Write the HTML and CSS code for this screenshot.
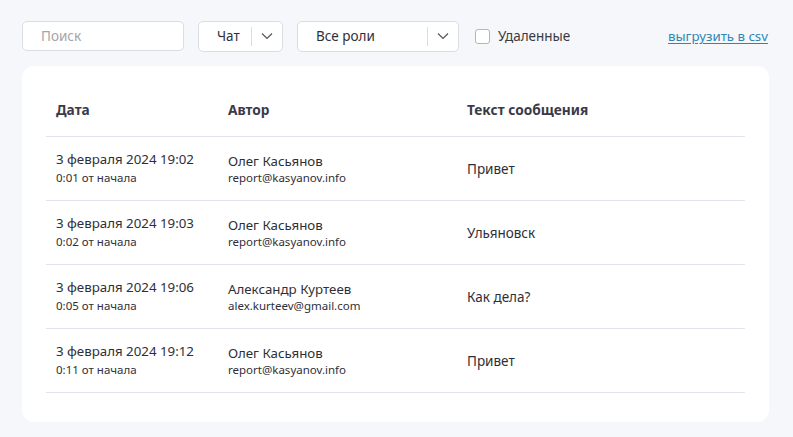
FILE: index.html
```html
<!DOCTYPE html>
<html lang="ru">
<head>
    <meta charset="UTF-8">
    <meta name="viewport" content="width=device-width, initial-scale=1.0">
    <title>Сообщения чата</title>
    <link rel="stylesheet" href="styles.css">
</head>
<body>
    <!-- Панель фильтров -->
    <div class="toolbar">
        <input class="search" type="text" placeholder="Поиск">

        <div class="select select-chat">
            <span class="select-value">Чат</span>
            <span class="select-arrow">
                <svg width="12" height="8" viewBox="0 0 12 8"><path d="M1 1.5l5 5 5-5" fill="none" stroke="#555" stroke-width="1.2"/></svg>
            </span>
        </div>

        <div class="select select-roles">
            <span class="select-value">Все роли</span>
            <span class="select-arrow">
                <svg width="12" height="8" viewBox="0 0 12 8"><path d="M1 1.5l5 5 5-5" fill="none" stroke="#555" stroke-width="1.2"/></svg>
            </span>
        </div>

        <label class="check">
            <span class="check-box"></span>
            Удаленные
        </label>

        <a class="export" href="#">выгрузить в csv</a>
    </div>

    <!-- Таблица сообщений -->
    <div class="card">
        <table class="messages">
            <thead>
                <tr>
                    <th class="col-date">Дата</th>
                    <th class="col-author">Автор</th>
                    <th>Текст сообщения</th>
                </tr>
            </thead>
            <tbody>
                <tr>
                    <td>
                        <div class="main">3 февраля 2024 19:02</div>
                        <div class="sub">0:01 от начала</div>
                    </td>
                    <td>
                        <div class="name">Олег Касьянов</div>
                        <div class="email">report@kasyanov.info</div>
                    </td>
                    <td class="text">Привет</td>
                </tr>
                <tr>
                    <td>
                        <div class="main">3 февраля 2024 19:03</div>
                        <div class="sub">0:02 от начала</div>
                    </td>
                    <td>
                        <div class="name">Олег Касьянов</div>
                        <div class="email">report@kasyanov.info</div>
                    </td>
                    <td class="text">Ульяновск</td>
                </tr>
                <tr>
                    <td>
                        <div class="main">3 февраля 2024 19:06</div>
                        <div class="sub">0:05 от начала</div>
                    </td>
                    <td>
                        <div class="name">Александр Куртеев</div>
                        <div class="email">alex.kurteev@gmail.com</div>
                    </td>
                    <td class="text">Как дела?</td>
                </tr>
                <tr>
                    <td>
                        <div class="main">3 февраля 2024 19:12</div>
                        <div class="sub">0:11 от начала</div>
                    </td>
                    <td>
                        <div class="name">Олег Касьянов</div>
                        <div class="email">report@kasyanov.info</div>
                    </td>
                    <td class="text">Привет</td>
                </tr>
            </tbody>
        </table>
    </div>
</body>
</html>
```

FILE: styles.css
```css
/* Общие стили */
body {
    font-family: "Noto Sans", "Open Sans", sans-serif;
    margin: 0;
    padding: 21px 24px 0 22px;
    background-color: #f6f7fb;
    color: #2f2f38;
}

/* Панель фильтров */
.toolbar {
    display: flex;
    align-items: center;
    height: 30px;
    margin-bottom: 15px;
}

.search {
    box-sizing: border-box;
    width: 162px;
    height: 30px;
    padding: 0 18px;
    font-family: inherit;
    font-size: 13.5px;
    border: 1px solid #dcdde3;
    border-radius: 5px;
    background-color: #fff;
    margin-right: 14px;
}

.search::placeholder {
    color: #a3a4ab;
}

.select {
    box-sizing: border-box;
    display: flex;
    align-items: center;
    height: 31px;
    border: 1px solid #dcdde3;
    border-radius: 5px;
    background-color: #fff;
    font-size: 13.5px;
    margin-right: 14px;
}

.select-chat {
    width: 85px;
}

.select-roles {
    width: 162px;
}

.select-value {
    flex: 1;
    padding-left: 18px;
}

.select-arrow {
    display: flex;
    align-items: center;
    justify-content: center;
    width: 30px;
    height: 19px;
    border-left: 1px solid #dcdde3;
}

.check {
    display: flex;
    align-items: center;
    font-size: 13.5px;
    color: #3a3a44;
    margin-left: 2px;
}

.check-box {
    box-sizing: border-box;
    width: 15px;
    height: 15px;
    border: 1.5px solid #b4b5bb;
    border-radius: 3px;
    margin-right: 8px;
    background-color: #fff;
}

.export {
    margin-left: auto;
    font-size: 13.3px;
    color: #2f86b3;
    text-decoration: underline;
    text-underline-offset: 2px;
    margin-right: 1px;
}

/* Карточка с таблицей */
.card {
    background-color: #fff;
    border-radius: 12px;
    padding: 20px 24px 29px;
}

.messages {
    width: 100%;
    border-collapse: collapse;
}

.messages th {
    text-align: left;
    font-size: 13.7px;
    font-weight: 700;
    color: #3a3a48;
    padding: 12px 10px 16px;
    height: 22px;
    border-bottom: 1.5px solid #e3e3ee;
}

.col-date {
    width: 152px;
}

.col-author {
    width: 219px;
}

.messages td {
    height: 63px;
    padding: 0 10px;
    border-bottom: 1.5px solid #e3e3ee;
    vertical-align: middle;
}

.main {
    font-size: 13.3px;
    line-height: 20px;
    margin-top: -2px;
}

.sub {
    font-size: 11.5px;
    line-height: 17px;
}

.name {
    font-size: 13.3px;
    line-height: 18px;
}

.email {
    font-size: 11.5px;
    line-height: 16px;
}

.text {
    font-size: 13.5px;
    padding-top: 2px;
}
```
